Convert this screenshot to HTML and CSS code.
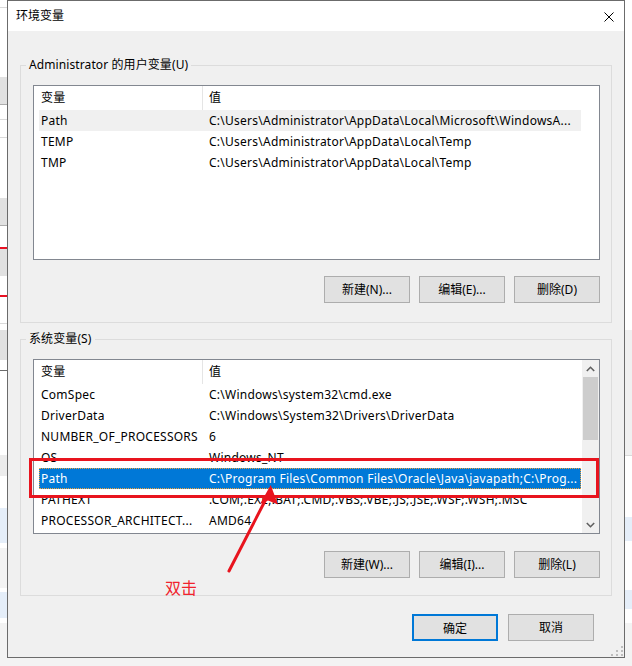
FILE: index.html
```html
<!DOCTYPE html>
<html lang="zh-CN">
<head>
<meta charset="utf-8">
<title>环境变量</title>
<link rel="stylesheet" href="styles.css">
</head>
<body>
<div class="screen">
  <div class="bg-strip bg-left"></div>
  <div class="dialog">
    <div class="titlebar">
      <span class="title">环境变量</span>
      <svg class="close" width="10" height="10" viewBox="0 0 10 10"><path d="M0.5 0.5L9.5 9.5M9.5 0.5L0.5 9.5" stroke="#000" stroke-width="1" fill="none"/></svg>
    </div>
    <div class="content">
      <fieldset class="group group-user">
        <legend>Administrator 的用户变量(U)</legend>
        <div class="list">
          <div class="list-main">
            <div class="list-header"><div class="col col-name">变量</div><div class="col col-value">值</div></div>
            <div class="row row-inactive"><div class="col col-name">Path</div><div class="col col-value">C:\Users\Administrator\AppData\Local\Microsoft\WindowsA...</div></div>
            <div class="row"><div class="col col-name">TEMP</div><div class="col col-value">C:\Users\Administrator\AppData\Local\Temp</div></div>
            <div class="row"><div class="col col-name">TMP</div><div class="col col-value">C:\Users\Administrator\AppData\Local\Temp</div></div>
          </div>
        </div>
        <div class="buttons">
          <button class="btn">新建(N)...</button>
          <button class="btn">编辑(E)...</button>
          <button class="btn">删除(D)</button>
        </div>
      </fieldset>
      <fieldset class="group group-system">
        <legend>系统变量(S)</legend>
        <div class="list">
          <div class="list-main">
            <div class="list-header"><div class="col col-name">变量</div><div class="col col-value">值</div></div>
            <div class="row"><div class="col col-name">ComSpec</div><div class="col col-value">C:\Windows\system32\cmd.exe</div></div>
            <div class="row"><div class="col col-name">DriverData</div><div class="col col-value">C:\Windows\System32\Drivers\DriverData</div></div>
            <div class="row"><div class="col col-name">NUMBER_OF_PROCESSORS</div><div class="col col-value">6</div></div>
            <div class="row"><div class="col col-name">OS</div><div class="col col-value">Windows_NT</div></div>
            <div class="row row-selected"><div class="col col-name">Path</div><div class="col col-value">C:\Program Files\Common Files\Oracle\Java\javapath;C:\Prog...</div></div>
            <div class="row"><div class="col col-name">PATHEXT</div><div class="col col-value">.COM;.EXE;.BAT;.CMD;.VBS;.VBE;.JS;.JSE;.WSF;.WSH;.MSC</div></div>
            <div class="row"><div class="col col-name">PROCESSOR_ARCHITECT...</div><div class="col col-value">AMD64</div></div>
          </div>
          <div class="scrollbar">
            <div class="sb-btn"><svg width="9" height="6" viewBox="0 0 9 6"><path d="M0.8 5L4.5 1.3L8.2 5" stroke="#606060" stroke-width="1.6" fill="none"/></svg></div>
            <div class="sb-thumb"></div>
            <div class="sb-track"></div>
            <div class="sb-btn"><svg width="9" height="6" viewBox="0 0 9 6"><path d="M0.8 1L4.5 4.7L8.2 1" stroke="#606060" stroke-width="1.6" fill="none"/></svg></div>
          </div>
        </div>
        <div class="buttons">
          <button class="btn">新建(W)...</button>
          <button class="btn">编辑(I)...</button>
          <button class="btn">删除(L)</button>
        </div>
      </fieldset>
      <div class="dialog-buttons">
        <button class="btn btn-default">确定</button>
        <button class="btn">取消</button>
      </div>
    </div>
    <svg class="grip" width="12" height="10" viewBox="0 0 12 10"><g fill="#bdbdbd"><rect x="10" y="0" width="2" height="2"/><rect x="5" y="4" width="2" height="2"/><rect x="10" y="4" width="2" height="2"/><rect x="0" y="8" width="2" height="2"/><rect x="5" y="8" width="2" height="2"/><rect x="10" y="8" width="2" height="2"/></g></svg>
  </div>
  <div class="bg-strip bg-right"></div>

  <div class="mark-box"></div>
  <svg class="mark-arrow" width="70" height="100" viewBox="0 0 70 100">
    <path d="M9 91L47 17" stroke="#e8141e" stroke-width="3" fill="none" stroke-linecap="round"/>
    <path d="M50.7 5L40 24L48 20.5L58 24.5Z" fill="#e8141e"/>
  </svg>
  <div class="mark-label">双击</div>
</div>
</body>
</html>
```

FILE: styles.css
```css
* {
  box-sizing: border-box;
}

html,
body {
  margin: 0;
  padding: 0;
}

body {
  font-family: "Noto Sans", "Noto Sans CJK SC", sans-serif;
  font-size: 12px;
  color: #000;
}

.screen {
  position: relative;
  display: flex;
  align-items: flex-start;
  width: 632px;
  height: 666px;
  background: #f3f3f3;
  overflow: hidden;
}

.bg-strip {
  flex: none;
  width: 7px;
  height: 666px;
}

.bg-left {
  background: linear-gradient(to bottom,
    #fff 0 7px, #dadada 7px 8px, #fff 8px 77px, #e1e1e1 77px 104px, #adadad 104px 105px,
    #fff 105px 119px, #dadada 119px 120px, #fff 120px 137px, #dadada 137px 138px,
    #fff 138px 198px, #e1e1e1 198px 225px, #adadad 225px 226px, #fff 226px 247px,
    #e81123 247px 249px, #e1e1e1 249px 276px, #fff 276px 295px, #e81123 295px 297px,
    #fff 297px 323px, #dadada 323px 324px, #fff 324px 330px, #e1e1e1 330px 360px,
    #fff 360px 370px, #6b6b6b 370px 371px, #fff 371px 455px, #ececec 455px 476px,
    #fff 476px 508px, #e5eef9 508px 543px, #fff 543px 548px, #f3f3f3 548px 588px,
    #fff 588px 592px, #e5eef9 592px 618px, #fff 618px 623px, #f3f3f3 623px 666px);
}

.bg-right {
  background: linear-gradient(to bottom,
    #fff 0 330px, #f0f0f0 330px 455px, #dadada 455px 456px, #fff 456px 517px,
    #e5eef9 517px 541px, #fff 541px 590px, #e5eef9 590px 609px, #fff 609px 623px,
    #f3f3f3 623px 666px);
}

.dialog {
  position: relative;
  flex: none;
  width: 618px;
  height: 658px;
  border: 1px solid #6b6b6b;
  background: #f0f0f0;
  display: flex;
  flex-direction: column;
}

.titlebar {
  height: 30px;
  background: #fff;
  display: flex;
  align-items: center;
  justify-content: space-between;
  padding: 0 10px 0 8px;
}

.title {
  line-height: 16px;
  margin-top: -1px;
}

.close {
  display: block;
  margin-top: 2px;
}

.content {
  padding: 26px 12px 0;
  display: flex;
  flex-direction: column;
}

.group {
  margin: 0;
  min-width: 0;
  border: 1px solid #dcdcdc;
  padding: 12px 11px 19px 12px;
}

.group-system {
  margin-top: 8px;
  padding-bottom: 17px;
}

.group legend {
  margin-left: -7px;
  padding: 0 3px;
  line-height: 16px;
  letter-spacing: 0.1px;
}

.list {
  height: 175px;
  border: 1px solid #828790;
  background: #fff;
  display: flex;
}

.list-main {
  flex: 1;
  min-width: 0;
  padding-left: 5px;
  overflow: hidden;
}

.list-header {
  display: flex;
  width: 542px;
  height: 24px;
  line-height: 24px;
}

.row {
  display: flex;
  width: 542px;
  height: 21px;
  line-height: 21px;
}

.col {
  flex: none;
  white-space: nowrap;
  overflow: hidden;
  letter-spacing: 0.25px;
}

.col-name {
  width: 164px;
  padding-left: 2px;
}

.col-value {
  width: 378px;
  padding-left: 6px;
}

.list-header .col-name {
  border-right: 1px solid #e5e5e5;
}

.row-inactive {
  background: #f0f0f0;
}

.row-selected {
  background: #0078d7;
  color: #fff;
  outline: 1px dotted #f3a33a;
  outline-offset: -1px;
}

.scrollbar {
  flex: none;
  width: 17px;
  background: #f0f0f0;
  display: flex;
  flex-direction: column;
}

.sb-btn {
  height: 17px;
  display: flex;
  align-items: center;
  justify-content: center;
}

.sb-btn svg {
  display: block;
}

.sb-thumb {
  height: 63px;
  margin: 0 1px;
  background: #cdcdcd;
}

.sb-track {
  flex: 1;
}

.buttons {
  display: flex;
  justify-content: flex-end;
  gap: 9px;
  margin-top: 16px;
}

.group-system .buttons {
  margin-top: 17px;
}

.btn {
  width: 86px;
  height: 27px;
  padding: 0;
  background: #e1e1e1;
  border: 1px solid #adadad;
  font: inherit;
  font-size: 12px;
  color: #000;
  line-height: 25px;
}

.btn-default {
  border: 2px solid #0078d7;
}

.dialog-buttons {
  display: flex;
  justify-content: flex-end;
  gap: 10px;
  margin-top: 18px;
  padding-right: 18px;
}

.grip {
  position: absolute;
  right: 1px;
  bottom: 1px;
  display: block;
}

.mark-box {
  position: absolute;
  left: 29px;
  top: 458px;
  width: 570px;
  height: 40px;
  border: 3px solid #e8141e;
}

.mark-arrow {
  position: absolute;
  left: 220px;
  top: 480px;
  display: block;
}

.mark-label {
  position: absolute;
  left: 165px;
  top: 578px;
  font-size: 16px;
  line-height: 20px;
  color: #f0232d;
}
```
